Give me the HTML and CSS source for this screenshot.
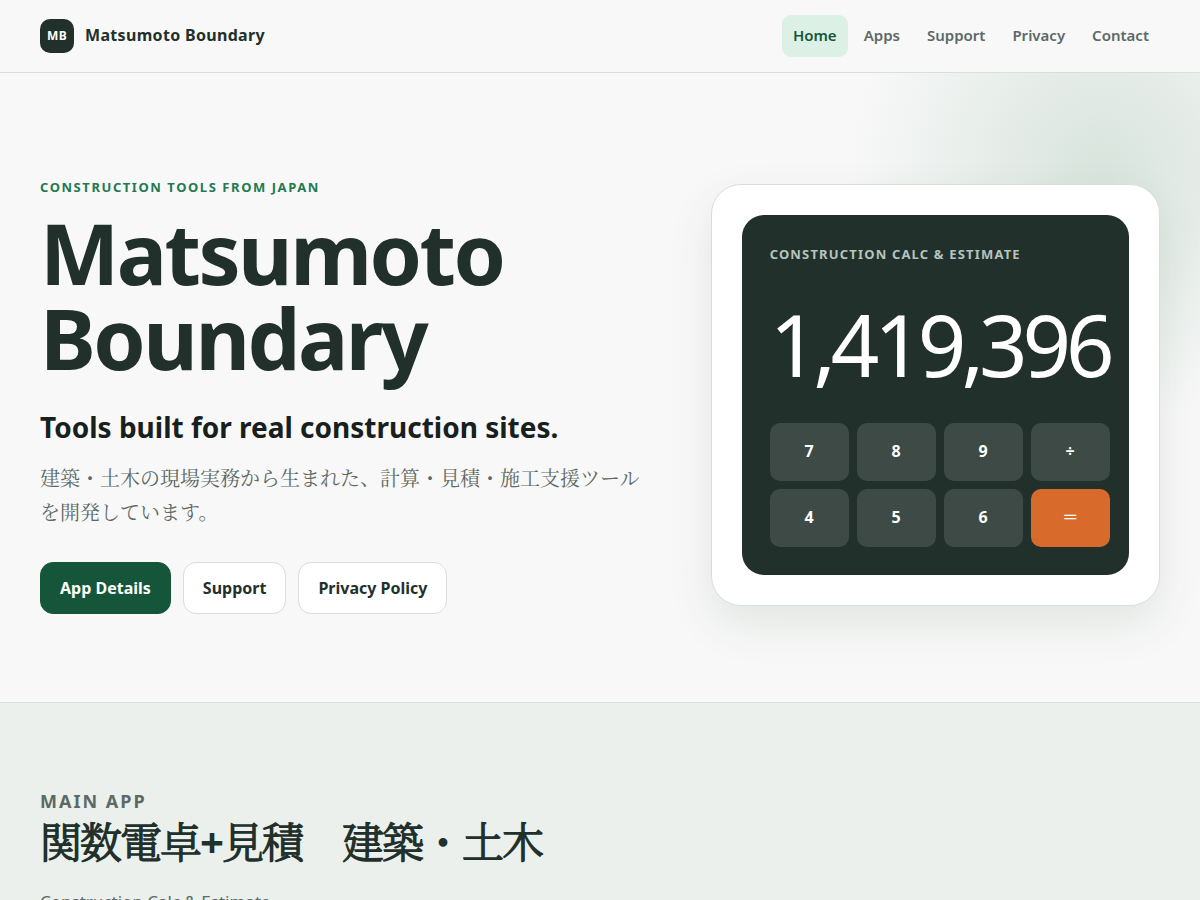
FILE: index.html
```html
<!DOCTYPE html>
<html lang="ja">
<head>
    <meta charset="UTF-8">
    <meta name="viewport" content="width=device-width, initial-scale=1.0">
    <title>Matsumoto Boundary</title>
    <link rel="stylesheet" href="styles.css">
</head>
<body>
    <header class="site-header">
        <div class="container header-inner">
            <a class="brand" href="/">
                <span class="brand-mark">MB</span>
                <span>Matsumoto Boundary</span>
            </a>
            <nav class="site-nav" aria-label="Main">
                <a class="active" href="/">Home</a>
                <a href="/apps/">Apps</a>
                <a href="/support/">Support</a>
                <a href="/privacy/">Privacy</a>
                <a href="/contact/">Contact</a>
            </nav>
        </div>
    </header>

    <main>
        <section class="hero">
            <div class="container hero-grid">
                <div class="hero-copy">
                    <p class="eyebrow">Construction tools from Japan</p>
                    <h1>Matsumoto Boundary</h1>
                    <p class="hero-lead">Tools built for real construction sites.</p>
                    <p class="hero-text">建築・土木の現場実務から生まれた、計算・見積・施工支援ツールを開発しています。</p>
                    <div class="actions">
                        <a class="button primary" href="/apps/">App Details</a>
                        <a class="button" href="/support/">Support</a>
                        <a class="button" href="/privacy/">Privacy Policy</a>
                    </div>
                </div>

                <div class="calc-card">
                    <div class="calc">
                        <p class="calc-label">Construction Calc &amp; Estimate</p>
                        <output class="calc-number">1,419,396</output>
                        <div class="calc-keys">
                            <button type="button">7</button>
                            <button type="button">8</button>
                            <button type="button">9</button>
                            <button type="button">÷</button>
                            <button type="button">4</button>
                            <button type="button">5</button>
                            <button type="button">6</button>
                            <button type="button" class="equals">＝</button>
                        </div>
                    </div>
                </div>
            </div>
        </section>

        <section class="main-app">
            <div class="container">
                <p class="section-label">Main App</p>
                <h2>関数電卓+見積　建築・土木</h2>
                <p class="section-text">Construction Calc &amp; Estimate</p>
            </div>
        </section>
    </main>
</body>
</html>
```
FILE: styles.css
```css
:root {
    --ink: #22302b;
    --text: #17201d;
    --muted: #5d6965;
    --line: #d9dedb;
    --green: #15563a;
    --paper: #f8f8f8;
}

* {
    box-sizing: border-box;
}

body {
    margin: 0;
    background: var(--paper);
    color: var(--text);
    font-family: "Noto Sans", "Noto Serif CJK JP Light", "Noto Serif CJK JP", serif;
    font-size: 16px;
    line-height: 1.7;
}

h1,
h2,
p {
    margin: 0;
}

a {
    color: inherit;
    text-decoration: none;
}

.container {
    max-width: 1200px;
    margin: 0 auto;
    padding: 0 40px;
}

/* Header */
.site-header {
    border-bottom: 1px solid var(--line);
}

.header-inner {
    display: flex;
    align-items: center;
    justify-content: space-between;
    min-height: 72px;
}

.brand {
    display: flex;
    align-items: center;
    gap: 11px;
    color: var(--ink);
    font-weight: 700;
    letter-spacing: 0.02em;
}

.brand-mark {
    display: grid;
    place-items: center;
    width: 34px;
    height: 34px;
    border-radius: 10px;
    background: var(--ink);
    color: #fff;
    font-size: 12px;
}

.site-nav {
    display: flex;
    gap: 5px;
    color: var(--muted);
    font-size: 15px;
    font-weight: 600;
}

.site-nav a {
    padding: 8px 11px;
    border-radius: 9px;
}

.site-nav .active {
    background: #ddf0e5;
    color: var(--green);
}

/* Hero */
.hero {
    padding: 103px 0 88px;
    border-bottom: 1px solid var(--line);
    background: radial-gradient(circle at calc(100% - 98px) 98px, #d8e4dd, rgba(216, 228, 221, 0) 255px);
}

.hero-grid {
    display: grid;
    grid-template-columns: minmax(0, 1.35fr) minmax(0, 1fr);
    gap: 64px;
    align-items: center;
}

.eyebrow {
    margin-bottom: 12px;
    color: #237a50;
    font-size: 13px;
    font-weight: 700;
    line-height: 22px;
    letter-spacing: 0.12em;
    text-transform: uppercase;
}

h1 {
    color: var(--ink);
    font-size: 84px;
    line-height: 85px;
    letter-spacing: -0.03em;
}

.hero-lead {
    margin-top: 27px;
    font-size: 28px;
    font-weight: 700;
    line-height: 40px;
}

.hero-text {
    margin-top: 15px;
    color: var(--muted);
    font-family: "Noto Sans", "Noto Serif CJK JP", serif;
    font-size: 20px;
    line-height: 34px;
}

.actions {
    display: flex;
    flex-wrap: wrap;
    gap: 12px;
    margin-top: 32px;
}

.button {
    padding: 12px 19px;
    border: 1px solid var(--line);
    border-radius: 13px;
    background: #fff;
    color: var(--ink);
    font-weight: 700;
    line-height: 26px;
}

.button.primary {
    border-color: var(--green);
    background: var(--green);
    color: #fff;
}

/* Calculator */
.calc-card {
    padding: 30px;
    border: 1px solid var(--line);
    border-radius: 30px;
    background: #fff;
    box-shadow: 0 18px 45px rgba(30, 65, 35, 0.1);
}

.calc {
    display: grid;
    align-content: space-between;
    min-height: 360px;
    padding: 28px;
    border-radius: 22px;
    background: var(--ink);
    color: #fff;
}

.calc-label {
    color: #b5c4bd;
    font-size: 13px;
    font-weight: 700;
    letter-spacing: 0.09em;
    text-transform: uppercase;
}

.calc-number {
    font-size: 85px;
    line-height: 85px;
    letter-spacing: -0.06em;
}

.calc-keys {
    display: grid;
    grid-template-columns: repeat(4, 1fr);
    gap: 8px;
}

.calc-keys button {
    height: 58px;
    padding: 0;
    border: 0;
    border-radius: 10px;
    background: #3e4a45;
    color: #fff;
    font: inherit;
    font-weight: 700;
}

.calc-keys .equals {
    background: #d86b2c;
}

/* Main app */
.main-app {
    padding: 83px 0;
    background: #ebf0ec;
}

.section-label {
    color: var(--muted);
    font-size: 18px;
    font-weight: 700;
    letter-spacing: 2px;
    text-transform: uppercase;
}

h2 {
    color: var(--ink);
    font-size: 42px;
    line-height: 50px;
    letter-spacing: -2px;
}

.section-text {
    margin-top: 21px;
    color: var(--muted);
    font-size: 17px;
}
```
